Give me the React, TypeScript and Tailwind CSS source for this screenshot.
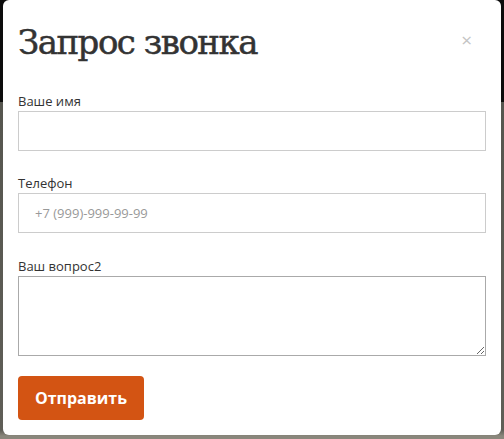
export default function App() {
  return (
    <div className="h-[439px] w-[504px] overflow-hidden bg-[linear-gradient(to_bottom,#0c0c0c_0px,#0c0c0c_102px,#56564f_102px,#5f5e57_430px,#8a877c_436px)] px-[3px]">
      <div
        className="flex h-[435px] flex-col rounded-b-md rounded-t-md bg-white px-[15px]"
        style={{ fontFamily: '"Open Sans", "Liberation Sans", sans-serif' }}
      >
        <div className="flex items-start justify-between pt-[24px]">
          <h4
            className="text-[34px] font-normal leading-[36px] tracking-[-1.5px] text-[#333] [-webkit-text-stroke:0.5px_#333]"
            style={{ fontFamily: '"DejaVu Serif", "Liberation Serif", serif' }}
          >
            Запрос звонка
          </h4>
          <button className="mr-[14px] mt-[1px] text-[19px] font-normal leading-[30px] text-[#c4c4c4]">
            ×
          </button>
        </div>

        <form className="mt-[31px] flex flex-col">
          <label className="text-[13px] leading-[20px] text-[#333]">Ваше имя</label>
          <input
            type="text"
            className="h-[40px] w-full border border-[#ccc] px-[15px] text-[13px] text-[#555] outline-none"
          />

          <label className="mt-[22px] text-[13px] leading-[20px] text-[#333]">Телефон</label>
          <input
            type="text"
            placeholder="+7 (999)-999-99-99"
            className="h-[40px] w-full border border-[#ccc] px-[16px] text-[13px] text-[#555] outline-none placeholder:text-[#999]"
          />

          <label className="mt-[23px] text-[13px] leading-[20px] text-[#333]">Ваш вопрос2</label>
          <textarea className="h-[80px] w-full border border-[#aaa] px-[15px] py-2 text-[13px] text-[#555] outline-none" />

          <div className="mt-[20px]">
            <button
              type="button"
              className="h-[44px] w-[126px] rounded-[4px] bg-[#d35413] text-[16px] font-bold text-white"
            >
              Отправить
            </button>
          </div>
        </form>
      </div>
    </div>
  );
}
